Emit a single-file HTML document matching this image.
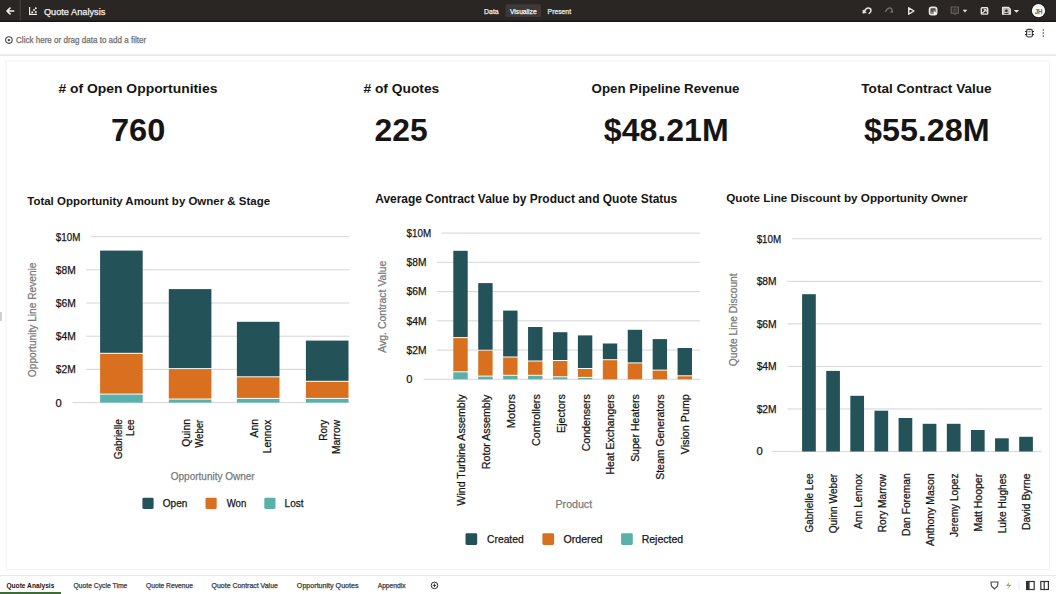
<!DOCTYPE html>
<html><head><meta charset="utf-8"><title>Quote Analysis</title>
<style>html,body{margin:0;padding:0;background:#fff;width:1056px;height:594px;overflow:hidden}svg text{font-family:"Liberation Sans", sans-serif}</style>
</head><body><svg width="1056" height="594" viewBox="0 0 1056 594" style="display:block"><rect x="0" y="0" width="1056" height="22" fill="#2a2624"/><rect x="0" y="20.4" width="1056" height="1.6" fill="#1b1816"/><rect x="19.5" y="0" width="1.5" height="20.4" fill="#3e3a37"/><path d="M13.6 11 H7.2 M10 8.2 L7 11 L10 13.8" stroke="#f0f0f0" stroke-width="1.7" fill="none" stroke-linecap="round" stroke-linejoin="round"/><path d="M29.6 7 V14.4 H37" stroke="#eeeeee" stroke-width="1.2" fill="none"/><circle cx="32.2" cy="12.2" r="1" fill="#eee"/><circle cx="34" cy="10" r="1" fill="#eee"/><circle cx="35.8" cy="8.2" r="1" fill="#eee"/><circle cx="35.8" cy="12" r="1" fill="#eee"/><text x="43.88" y="14.70" font-size="9.71" fill="#f2f2f2" stroke="#f2f2f2" stroke-width="0.25" textLength="61.44" lengthAdjust="spacingAndGlyphs">Quote Analysis</text><rect x="505.5" y="4.3" width="35.5" height="12.7" rx="1.5" fill="#3d3936"/><text x="484.10" y="13.50" font-size="6.52" fill="#e8e8e8" stroke="#e8e8e8" stroke-width="0.25" textLength="14.63" lengthAdjust="spacingAndGlyphs">Data</text><text x="509.95" y="13.50" font-size="6.52" fill="#f2f2f2" stroke="#f2f2f2" stroke-width="0.25" textLength="26.74" lengthAdjust="spacingAndGlyphs">Visualize</text><text x="547.61" y="13.50" font-size="6.52" fill="#e8e8e8" stroke="#e8e8e8" stroke-width="0.25" textLength="23.43" lengthAdjust="spacingAndGlyphs">Present</text><path d="M869.2 13.4 C871.8 12 871.6 8 868.4 8 C866.6 8 865.2 9.4 864.3 11.6" stroke="#e6e6e6" stroke-width="1.5" fill="none" stroke-linecap="round"/><path d="M862.8 13.2 L863 9.9 L866.3 12.6 Z" fill="#e6e6e6" stroke="#e6e6e6" stroke-width="0.6" stroke-linejoin="round"/><path d="M885.6 11.4 C886.6 9.2 888 8 889.8 8 C891.4 8 892.2 9.6 892 11" stroke="#6e6a66" stroke-width="1.4" fill="none" stroke-linecap="round"/><path d="M892.8 13 L889.6 12.2 L893 9.8 Z" fill="#6e6a66"/><path d="M908.7 7.8 L914 11 L908.7 14.2 Z" stroke="#e6e6e6" stroke-width="1.4" fill="none" stroke-linejoin="round"/><rect x="929.4" y="7.2" width="7.4" height="7.6" rx="2.2" stroke="#e6e6e6" stroke-width="1.4" fill="#8a8580"/><path d="M931 9.2 H935 M931 10.9 H933.5" stroke="#2a2624" stroke-width="0.8"/><circle cx="934.8" cy="13" r="1.2" fill="#fff"/><path d="M951.2 7 H958.3 V13.2 H956 L955 14.3 L954 13.2 H951.2 Z" stroke="#6a6561" stroke-width="1.2" fill="none" stroke-linejoin="round"/><path d="M952.8 9.2 H956.8 M952.8 11 H956.8" stroke="#6a6561" stroke-width="0.8"/><path d="M962.6 9.8 H967.3 L964.95 12.5 Z" fill="#e6e6e6"/><rect x="981.3" y="7.7" width="6.4" height="6.4" rx="0.8" stroke="#e6e6e6" stroke-width="1.4" fill="none"/><path d="M982.2 13.4 L985.6 10" stroke="#e6e6e6" stroke-width="1.3"/><path d="M983.6 9.6 H986.2 V12.2" stroke="#e6e6e6" stroke-width="1" fill="none"/><path d="M1002.6 7.4 H1008.6 L1010.3 9.1 V14.2 H1002.6 Z" stroke="#e6e6e6" stroke-width="1.3" fill="#bdb8b3" stroke-linejoin="round"/><circle cx="1006.4" cy="10.8" r="1.3" fill="#2a2624"/><path d="M1004.4 13.6 H1008.4" stroke="#2a2624" stroke-width="0.9"/><path d="M1013.8 10 H1019.2 L1016.5 12.8 Z" fill="#e6e6e6"/><circle cx="1038.5" cy="10.7" r="7.2" fill="#111"/><circle cx="1038.5" cy="10.7" r="6.6" fill="#fafafa"/><text x="1034.99" y="13.50" font-size="6.96" fill="#4a4a4a" stroke="#4a4a4a" stroke-width="0.25" textLength="7.40" lengthAdjust="spacingAndGlyphs">JH</text><circle cx="8.9" cy="40.1" r="3.3" stroke="#444" stroke-width="1.1" fill="none"/><circle cx="8.9" cy="40.1" r="1.2" fill="#444"/><text x="16.05" y="42.60" font-size="8.26" fill="#707070" stroke="#707070" stroke-width="0.25" textLength="130.11" lengthAdjust="spacingAndGlyphs">Click here or drag data to add a filter</text><rect x="1026.6" y="29.4" width="5.8" height="7.6" rx="1.8" stroke="#3a3a3a" stroke-width="1.1" fill="#f4f4f4"/><path d="M1025.5 31.5 H1026.6 M1025.5 34.6 H1026.6 M1032.4 31.5 H1033.5 M1032.4 34.6 H1033.5" stroke="#222" stroke-width="1.1" stroke-linecap="round"/><path d="M1028.4 31.7 H1030.6 M1028.4 34.5 H1030.6" stroke="#555" stroke-width="0.9"/><circle cx="1043.3" cy="30" r="0.8" fill="#444"/><circle cx="1043.3" cy="33" r="0.8" fill="#444"/><circle cx="1043.3" cy="36" r="0.8" fill="#444"/><rect x="0" y="54.6" width="1056" height="1.2" fill="#e2e2e2"/><rect x="6" y="61" width="1043.5" height="508.5" fill="#ffffff" stroke="#f1f1f1" stroke-width="1"/><text x="58.41" y="92.60" font-size="13.29" fill="#161513" font-weight="bold" textLength="159.04" lengthAdjust="spacingAndGlyphs"># of Open Opportunities</text><text x="363.41" y="92.60" font-size="13.29" fill="#161513" font-weight="bold" textLength="75.84" lengthAdjust="spacingAndGlyphs"># of Quotes</text><text x="591.62" y="92.60" font-size="13.29" fill="#161513" font-weight="bold" textLength="147.88" lengthAdjust="spacingAndGlyphs">Open Pipeline Revenue</text><text x="861.31" y="92.60" font-size="13.29" fill="#161513" font-weight="bold" textLength="130.39" lengthAdjust="spacingAndGlyphs">Total Contract Value</text><text x="110.95" y="140.80" font-size="31.00" fill="#161513" font-weight="bold" textLength="54.38" lengthAdjust="spacingAndGlyphs">760</text><text x="374.50" y="140.80" font-size="31.00" fill="#161513" font-weight="bold" textLength="53.09" lengthAdjust="spacingAndGlyphs">225</text><text x="603.83" y="140.80" font-size="31.00" fill="#161513" font-weight="bold" textLength="124.84" lengthAdjust="spacingAndGlyphs">$48.21M</text><text x="864.03" y="140.80" font-size="31.00" fill="#161513" font-weight="bold" textLength="125.56" lengthAdjust="spacingAndGlyphs">$55.28M</text><text x="27.24" y="205.40" font-size="11.43" fill="#161513" font-weight="bold" textLength="242.81" lengthAdjust="spacingAndGlyphs">Total Opportunity Amount by Owner &amp; Stage</text><rect x="72.70" y="402.05" width="276.70" height="1.1" fill="#d9d9d9"/><text x="55.61" y="406.50" font-size="11.01" fill="#161513" stroke="#161513" stroke-width="0.25" textLength="6.24" lengthAdjust="spacingAndGlyphs">0</text><rect x="86.20" y="368.85" width="263.20" height="1.1" fill="#d9d9d9"/><text x="55.85" y="373.30" font-size="11.01" fill="#161513" stroke="#161513" stroke-width="0.25" textLength="19.85" lengthAdjust="spacingAndGlyphs">$2M</text><rect x="86.40" y="335.65" width="263.00" height="1.1" fill="#d9d9d9"/><text x="55.85" y="340.10" font-size="11.01" fill="#161513" stroke="#161513" stroke-width="0.25" textLength="20.06" lengthAdjust="spacingAndGlyphs">$4M</text><rect x="86.40" y="302.45" width="263.00" height="1.1" fill="#d9d9d9"/><text x="55.85" y="306.90" font-size="11.01" fill="#161513" stroke="#161513" stroke-width="0.25" textLength="20.06" lengthAdjust="spacingAndGlyphs">$6M</text><rect x="86.20" y="269.25" width="263.20" height="1.1" fill="#d9d9d9"/><text x="55.85" y="273.70" font-size="11.01" fill="#161513" stroke="#161513" stroke-width="0.25" textLength="19.85" lengthAdjust="spacingAndGlyphs">$8M</text><rect x="90.90" y="236.05" width="258.50" height="1.1" fill="#d9d9d9"/><text x="55.85" y="240.50" font-size="11.01" fill="#161513" stroke="#161513" stroke-width="0.25" textLength="24.51" lengthAdjust="spacingAndGlyphs">$10M</text><rect x="100.10" y="250.60" width="42.60" height="102.20" fill="#235258"/><rect x="100.10" y="353.80" width="42.60" height="39.80" fill="#d8701f"/><rect x="100.10" y="394.60" width="42.60" height="8.00" fill="#5ab1ab"/><rect x="168.80" y="289.10" width="42.60" height="79.00" fill="#235258"/><rect x="168.80" y="369.10" width="42.60" height="29.45" fill="#d8701f"/><rect x="168.80" y="399.55" width="42.60" height="3.05" fill="#5ab1ab"/><rect x="236.90" y="321.80" width="42.60" height="54.50" fill="#235258"/><rect x="236.90" y="377.30" width="42.60" height="20.60" fill="#d8701f"/><rect x="236.90" y="398.90" width="42.60" height="3.70" fill="#5ab1ab"/><rect x="305.90" y="340.60" width="42.60" height="40.20" fill="#235258"/><rect x="305.90" y="381.80" width="42.60" height="16.10" fill="#d8701f"/><rect x="305.90" y="398.90" width="42.60" height="3.70" fill="#5ab1ab"/><text transform="translate(121.60,459.35) rotate(-90)" font-size="10.87" fill="#161513" stroke="#161513" stroke-width="0.25" textLength="40.06" lengthAdjust="spacingAndGlyphs">Gabrielle</text><text transform="translate(133.80,436.04) rotate(-90)" font-size="10.87" fill="#161513" stroke="#161513" stroke-width="0.25" textLength="16.55" lengthAdjust="spacingAndGlyphs">Lee</text><text transform="translate(190.30,446.77) rotate(-90)" font-size="10.87" fill="#161513" stroke="#161513" stroke-width="0.25" textLength="27.70" lengthAdjust="spacingAndGlyphs">Quinn</text><text transform="translate(202.50,447.75) rotate(-90)" font-size="10.87" fill="#161513" stroke="#161513" stroke-width="0.25" textLength="28.02" lengthAdjust="spacingAndGlyphs">Weber</text><text transform="translate(258.40,437.55) rotate(-90)" font-size="10.87" fill="#161513" stroke="#161513" stroke-width="0.25" textLength="18.48" lengthAdjust="spacingAndGlyphs">Ann</text><text transform="translate(270.60,453.16) rotate(-90)" font-size="10.87" fill="#161513" stroke="#161513" stroke-width="0.25" textLength="33.42" lengthAdjust="spacingAndGlyphs">Lennox</text><text transform="translate(327.40,440.65) rotate(-90)" font-size="10.87" fill="#161513" stroke="#161513" stroke-width="0.25" textLength="21.00" lengthAdjust="spacingAndGlyphs">Rory</text><text transform="translate(339.60,454.07) rotate(-90)" font-size="10.87" fill="#161513" stroke="#161513" stroke-width="0.25" textLength="34.14" lengthAdjust="spacingAndGlyphs">Marrow</text><text x="170.75" y="479.60" font-size="10.72" fill="#7a7a7a" stroke="#7a7a7a" stroke-width="0.25" textLength="83.93" lengthAdjust="spacingAndGlyphs">Opportunity Owner</text><text transform="translate(35.80,377.16) rotate(-90)" font-size="10.43" fill="#7a7a7a" stroke="#7a7a7a" stroke-width="0.25" textLength="114.67" lengthAdjust="spacingAndGlyphs">Opportunity Line Revenie</text><rect x="142.4" y="497.8" width="11.2" height="11.1" rx="1.3" fill="#235258"/><text x="162.75" y="507.40" font-size="10.29" fill="#161513" stroke="#161513" stroke-width="0.25" textLength="24.67" lengthAdjust="spacingAndGlyphs">Open</text><rect x="205.5" y="497.8" width="11.2" height="11.1" rx="1.3" fill="#d8701f"/><text x="226.65" y="507.40" font-size="10.29" fill="#161513" stroke="#161513" stroke-width="0.25" textLength="19.64" lengthAdjust="spacingAndGlyphs">Won</text><rect x="264.3" y="497.8" width="11.2" height="11.1" rx="1.3" fill="#5ab1ab"/><text x="284.55" y="507.40" font-size="10.29" fill="#161513" stroke="#161513" stroke-width="0.25" textLength="18.98" lengthAdjust="spacingAndGlyphs">Lost</text><text x="375.21" y="202.50" font-size="12.29" fill="#161513" font-weight="bold" textLength="302.07" lengthAdjust="spacingAndGlyphs">Average Contract Value by Product and Quote Status</text><rect x="423.40" y="378.75" width="276.80" height="1.1" fill="#d9d9d9"/><text x="406.31" y="383.20" font-size="11.01" fill="#161513" stroke="#161513" stroke-width="0.25" textLength="6.24" lengthAdjust="spacingAndGlyphs">0</text><rect x="436.90" y="349.51" width="263.30" height="1.1" fill="#d9d9d9"/><text x="406.55" y="353.96" font-size="11.01" fill="#161513" stroke="#161513" stroke-width="0.25" textLength="19.85" lengthAdjust="spacingAndGlyphs">$2M</text><rect x="437.10" y="320.27" width="263.10" height="1.1" fill="#d9d9d9"/><text x="406.55" y="324.72" font-size="11.01" fill="#161513" stroke="#161513" stroke-width="0.25" textLength="20.06" lengthAdjust="spacingAndGlyphs">$4M</text><rect x="437.10" y="291.03" width="263.10" height="1.1" fill="#d9d9d9"/><text x="406.55" y="295.48" font-size="11.01" fill="#161513" stroke="#161513" stroke-width="0.25" textLength="20.06" lengthAdjust="spacingAndGlyphs">$6M</text><rect x="436.90" y="261.79" width="263.30" height="1.1" fill="#d9d9d9"/><text x="406.55" y="266.24" font-size="11.01" fill="#161513" stroke="#161513" stroke-width="0.25" textLength="19.85" lengthAdjust="spacingAndGlyphs">$8M</text><rect x="441.60" y="232.55" width="258.60" height="1.1" fill="#d9d9d9"/><text x="406.55" y="237.00" font-size="11.01" fill="#161513" stroke="#161513" stroke-width="0.25" textLength="24.51" lengthAdjust="spacingAndGlyphs">$10M</text><rect x="453.30" y="250.80" width="14.40" height="86.30" fill="#235258"/><rect x="453.30" y="338.10" width="14.40" height="33.20" fill="#d8701f"/><rect x="453.30" y="372.30" width="14.40" height="7.00" fill="#5ab1ab"/><rect x="478.22" y="283.10" width="14.40" height="66.60" fill="#235258"/><rect x="478.22" y="350.70" width="14.40" height="24.90" fill="#d8701f"/><rect x="478.22" y="376.60" width="14.40" height="2.70" fill="#5ab1ab"/><rect x="503.14" y="310.60" width="14.40" height="45.90" fill="#235258"/><rect x="503.14" y="357.50" width="14.40" height="17.30" fill="#d8701f"/><rect x="503.14" y="375.80" width="14.40" height="3.50" fill="#5ab1ab"/><rect x="528.06" y="327.00" width="14.40" height="33.50" fill="#235258"/><rect x="528.06" y="361.50" width="14.40" height="13.30" fill="#d8701f"/><rect x="528.06" y="375.80" width="14.40" height="3.50" fill="#5ab1ab"/><rect x="552.98" y="332.20" width="14.40" height="27.80" fill="#235258"/><rect x="552.98" y="361.00" width="14.40" height="15.30" fill="#d8701f"/><rect x="552.98" y="377.30" width="14.40" height="2.00" fill="#5ab1ab"/><rect x="577.90" y="335.40" width="14.40" height="32.60" fill="#235258"/><rect x="577.90" y="369.00" width="14.40" height="7.90" fill="#d8701f"/><rect x="577.90" y="377.90" width="14.40" height="1.40" fill="#5ab1ab"/><rect x="602.82" y="343.50" width="14.40" height="15.70" fill="#235258"/><rect x="602.82" y="360.20" width="14.40" height="19.10" fill="#d8701f"/><rect x="627.74" y="329.80" width="14.40" height="32.60" fill="#235258"/><rect x="627.74" y="363.40" width="14.40" height="15.90" fill="#d8701f"/><rect x="652.66" y="339.10" width="14.40" height="30.50" fill="#235258"/><rect x="652.66" y="370.60" width="14.40" height="8.70" fill="#d8701f"/><rect x="677.58" y="348.00" width="14.40" height="27.30" fill="#235258"/><rect x="677.58" y="376.30" width="14.40" height="3.00" fill="#d8701f"/><text transform="translate(464.90,505.65) rotate(-90)" font-size="11.01" fill="#161513" stroke="#161513" stroke-width="0.25" textLength="111.10" lengthAdjust="spacingAndGlyphs">Wind Turbine Assembly</text><text transform="translate(489.82,469.20) rotate(-90)" font-size="11.01" fill="#161513" stroke="#161513" stroke-width="0.25" textLength="74.65" lengthAdjust="spacingAndGlyphs">Rotor Assembly</text><text transform="translate(514.74,428.24) rotate(-90)" font-size="11.01" fill="#161513" stroke="#161513" stroke-width="0.25" textLength="34.02" lengthAdjust="spacingAndGlyphs">Motors</text><text transform="translate(539.66,445.88) rotate(-90)" font-size="11.01" fill="#161513" stroke="#161513" stroke-width="0.25" textLength="51.65" lengthAdjust="spacingAndGlyphs">Controllers</text><text transform="translate(564.58,432.91) rotate(-90)" font-size="11.01" fill="#161513" stroke="#161513" stroke-width="0.25" textLength="38.68" lengthAdjust="spacingAndGlyphs">Ejectors</text><text transform="translate(589.50,451.28) rotate(-90)" font-size="11.01" fill="#161513" stroke="#161513" stroke-width="0.25" textLength="57.05" lengthAdjust="spacingAndGlyphs">Condensers</text><text transform="translate(614.42,474.59) rotate(-90)" font-size="11.01" fill="#161513" stroke="#161513" stroke-width="0.25" textLength="80.35" lengthAdjust="spacingAndGlyphs">Heat Exchangers</text><text transform="translate(639.34,461.87) rotate(-90)" font-size="11.01" fill="#161513" stroke="#161513" stroke-width="0.25" textLength="67.63" lengthAdjust="spacingAndGlyphs">Super Heaters</text><text transform="translate(664.26,479.77) rotate(-90)" font-size="11.01" fill="#161513" stroke="#161513" stroke-width="0.25" textLength="85.53" lengthAdjust="spacingAndGlyphs">Steam Generators</text><text transform="translate(689.18,454.25) rotate(-90)" font-size="11.01" fill="#161513" stroke="#161513" stroke-width="0.25" textLength="60.09" lengthAdjust="spacingAndGlyphs">Vision Pump</text><text x="555.50" y="507.50" font-size="10.72" fill="#7a7a7a" stroke="#7a7a7a" stroke-width="0.25" textLength="36.63" lengthAdjust="spacingAndGlyphs">Product</text><text transform="translate(385.50,352.75) rotate(-90)" font-size="11.01" fill="#7a7a7a" stroke="#7a7a7a" stroke-width="0.25" textLength="92.18" lengthAdjust="spacingAndGlyphs">Avg. Contract Value</text><rect x="465.5" y="533.2" width="11.7" height="11.7" rx="1.3" fill="#235258"/><text x="487.03" y="543.20" font-size="10.72" fill="#161513" stroke="#161513" stroke-width="0.25" textLength="36.69" lengthAdjust="spacingAndGlyphs">Created</text><rect x="542.4" y="533.2" width="11.7" height="11.7" rx="1.3" fill="#d8701f"/><text x="563.42" y="543.20" font-size="10.72" fill="#161513" stroke="#161513" stroke-width="0.25" textLength="39.13" lengthAdjust="spacingAndGlyphs">Ordered</text><rect x="621.1" y="533.2" width="11.7" height="11.7" rx="1.3" fill="#5ab1ab"/><text x="641.71" y="543.20" font-size="10.72" fill="#161513" stroke="#161513" stroke-width="0.25" textLength="41.43" lengthAdjust="spacingAndGlyphs">Rejected</text><text x="726.18" y="202.00" font-size="11.57" fill="#161513" font-weight="bold" textLength="241.28" lengthAdjust="spacingAndGlyphs">Quote Line Discount by Opportunity Owner</text><rect x="772.00" y="450.95" width="269.70" height="1.1" fill="#d9d9d9"/><text x="756.41" y="455.40" font-size="11.01" fill="#161513" stroke="#161513" stroke-width="0.25" textLength="6.24" lengthAdjust="spacingAndGlyphs">0</text><rect x="787.20" y="408.40" width="254.50" height="1.1" fill="#d9d9d9"/><text x="756.65" y="412.85" font-size="11.01" fill="#161513" stroke="#161513" stroke-width="0.25" textLength="19.85" lengthAdjust="spacingAndGlyphs">$2M</text><rect x="787.40" y="365.85" width="254.30" height="1.1" fill="#d9d9d9"/><text x="756.65" y="370.30" font-size="11.01" fill="#161513" stroke="#161513" stroke-width="0.25" textLength="20.06" lengthAdjust="spacingAndGlyphs">$4M</text><rect x="787.40" y="323.30" width="254.30" height="1.1" fill="#d9d9d9"/><text x="756.65" y="327.75" font-size="11.01" fill="#161513" stroke="#161513" stroke-width="0.25" textLength="20.06" lengthAdjust="spacingAndGlyphs">$6M</text><rect x="787.20" y="280.75" width="254.50" height="1.1" fill="#d9d9d9"/><text x="756.65" y="285.20" font-size="11.01" fill="#161513" stroke="#161513" stroke-width="0.25" textLength="19.85" lengthAdjust="spacingAndGlyphs">$8M</text><rect x="791.90" y="238.20" width="249.80" height="1.1" fill="#d9d9d9"/><text x="756.65" y="242.65" font-size="11.01" fill="#161513" stroke="#161513" stroke-width="0.25" textLength="24.51" lengthAdjust="spacingAndGlyphs">$10M</text><rect x="802.10" y="294.20" width="13.70" height="157.30" fill="#235258"/><rect x="826.22" y="370.90" width="13.70" height="80.60" fill="#235258"/><rect x="850.34" y="395.80" width="13.70" height="55.70" fill="#235258"/><rect x="874.46" y="410.70" width="13.70" height="40.80" fill="#235258"/><rect x="898.58" y="418.00" width="13.70" height="33.50" fill="#235258"/><rect x="922.70" y="423.80" width="13.70" height="27.70" fill="#235258"/><rect x="946.82" y="423.80" width="13.70" height="27.70" fill="#235258"/><rect x="970.94" y="430.00" width="13.70" height="21.50" fill="#235258"/><rect x="995.06" y="438.30" width="13.70" height="13.20" fill="#235258"/><rect x="1019.18" y="436.80" width="13.70" height="14.70" fill="#235258"/><text transform="translate(813.30,532.55) rotate(-90)" font-size="10.58" fill="#161513" stroke="#161513" stroke-width="0.25" textLength="58.95" lengthAdjust="spacingAndGlyphs">Gabrielle Lee</text><text transform="translate(837.42,533.36) rotate(-90)" font-size="10.58" fill="#161513" stroke="#161513" stroke-width="0.25" textLength="59.54" lengthAdjust="spacingAndGlyphs">Quinn Weber</text><text transform="translate(861.54,529.05) rotate(-90)" font-size="10.58" fill="#161513" stroke="#161513" stroke-width="0.25" textLength="55.20" lengthAdjust="spacingAndGlyphs">Ann Lennox</text><text transform="translate(885.66,532.26) rotate(-90)" font-size="10.58" fill="#161513" stroke="#161513" stroke-width="0.25" textLength="58.23" lengthAdjust="spacingAndGlyphs">Rory Marrow</text><text transform="translate(909.78,535.97) rotate(-90)" font-size="10.58" fill="#161513" stroke="#161513" stroke-width="0.25" textLength="62.59" lengthAdjust="spacingAndGlyphs">Dan Foreman</text><text transform="translate(933.90,545.95) rotate(-90)" font-size="10.58" fill="#161513" stroke="#161513" stroke-width="0.25" textLength="72.59" lengthAdjust="spacingAndGlyphs">Anthony Mason</text><text transform="translate(958.02,536.95) rotate(-90)" font-size="10.58" fill="#161513" stroke="#161513" stroke-width="0.25" textLength="63.40" lengthAdjust="spacingAndGlyphs">Jeremy Lopez</text><text transform="translate(982.14,531.59) rotate(-90)" font-size="10.58" fill="#161513" stroke="#161513" stroke-width="0.25" textLength="57.78" lengthAdjust="spacingAndGlyphs">Matt Hooper</text><text transform="translate(1006.26,533.26) rotate(-90)" font-size="10.58" fill="#161513" stroke="#161513" stroke-width="0.25" textLength="59.61" lengthAdjust="spacingAndGlyphs">Luke Hughes</text><text transform="translate(1030.38,529.88) rotate(-90)" font-size="10.58" fill="#161513" stroke="#161513" stroke-width="0.25" textLength="56.30" lengthAdjust="spacingAndGlyphs">David Byrne</text><text transform="translate(736.50,366.26) rotate(-90)" font-size="10.43" fill="#7a7a7a" stroke="#7a7a7a" stroke-width="0.25" textLength="92.89" lengthAdjust="spacingAndGlyphs">Quote Line Discount</text><rect x="0" y="575" width="1056" height="1" fill="#e8e8e8"/><text x="6.39" y="587.70" font-size="6.86" fill="#161513" font-weight="bold" textLength="48.00" lengthAdjust="spacingAndGlyphs">Quote Analysis</text><text x="73.58" y="587.70" font-size="6.96" fill="#3c3c3c" stroke="#3c3c3c" stroke-width="0.25" textLength="53.71" lengthAdjust="spacingAndGlyphs">Quote Cycle Time</text><text x="145.98" y="587.70" font-size="6.96" fill="#3c3c3c" stroke="#3c3c3c" stroke-width="0.25" textLength="47.01" lengthAdjust="spacingAndGlyphs">Quote Revenue</text><text x="211.57" y="587.70" font-size="6.96" fill="#3c3c3c" stroke="#3c3c3c" stroke-width="0.25" textLength="66.33" lengthAdjust="spacingAndGlyphs">Quote Contract Value</text><text x="296.87" y="587.70" font-size="6.96" fill="#3c3c3c" stroke="#3c3c3c" stroke-width="0.25" textLength="61.70" lengthAdjust="spacingAndGlyphs">Opportunity Quotes</text><text x="377.65" y="587.70" font-size="6.96" fill="#3c3c3c" stroke="#3c3c3c" stroke-width="0.25" textLength="28.07" lengthAdjust="spacingAndGlyphs">Appendix</text><rect x="0" y="592" width="61" height="2" fill="#3f6b3a"/><circle cx="434.5" cy="585.4" r="3.3" stroke="#333" stroke-width="1" fill="none"/><path d="M434.5 583.6 V587.2 M432.7 585.4 H436.3" stroke="#333" stroke-width="0.9"/><path d="M991 582 H998 L997.6 586 L994.5 589 L991.4 586 Z" stroke="#444" stroke-width="1.1" fill="none"/><path d="M1009.5 581.5 L1006 586 H1009 L1007.3 589.5 L1011.5 584.8 H1008.5 Z" fill="#9cae4c"/><rect x="1018.6" y="580" width="0.7" height="10" fill="#e4e4e4"/><rect x="1026.6" y="581.5" width="7.6" height="8" stroke="#333" stroke-width="1.2" fill="none"/><rect x="1026.6" y="581.5" width="3" height="8" fill="#333"/><rect x="1040.8" y="581.5" width="7.6" height="8" stroke="#333" stroke-width="1.2" fill="none"/><rect x="1043.6" y="581.5" width="1.2" height="8" fill="#333"/><rect x="0" y="312" width="2" height="9" fill="#cfcfcf"/></svg></body></html>
